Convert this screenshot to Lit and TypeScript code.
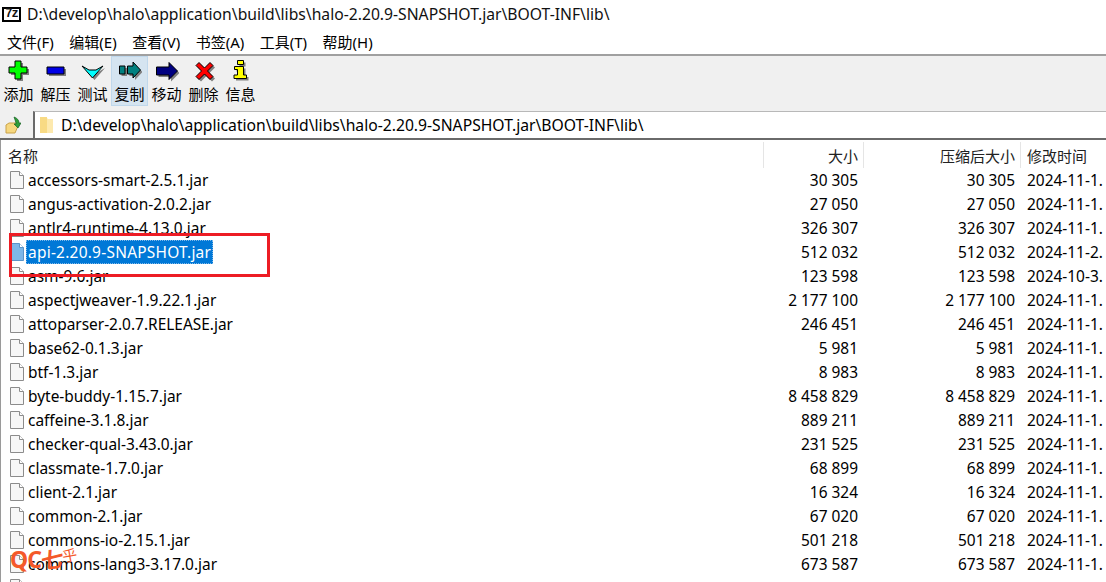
import { LitElement, html, css, svg } from 'lit';
import { customElement } from 'lit/decorators.js';

const MENUS = ['文件(F)', '编辑(E)', '查看(V)', '书签(A)', '工具(T)', '帮助(H)'];
const PATH = 'D:\\develop\\halo\\application\\build\\libs\\halo-2.20.9-SNAPSHOT.jar\\BOOT-INF\\lib\\';

// toolbar glyphs: black outline plus a grey drop shadow, like the old 7-Zip bitmaps
const shape = (points: string, fill: string) => svg`
  <polygon points=${points} fill="#808080" transform="translate(2 2)" />
  <polygon points=${points} fill=${fill} stroke="#000" stroke-width="1" />
`;

const TOOLS = [
  { label: '添加', icon: shape('8,3 14,3 14,9 20,9 20,15 14,15 14,21 8,21 8,15 2,15 2,9 8,9', '#00ff00') },
  { label: '解压', icon: shape('3,9 20,9 20,16 3,16', '#0000e6') },
  { label: '测试', icon: shape('1,8 8,12 15,12 22,8 11.5,20', '#00ffff') },
  {
    label: '复制',
    active: true,
    icon: svg`${shape('1.5,8 7,8 7,16 1.5,16', '#008080')}${shape('9.5,8 15,8 15,4 22.5,12 15,20 15,16 9.5,16', '#008080')}`,
  },
  { label: '移动', icon: shape('1.5,9 14,9 14,4.5 22.5,13 14,21.5 14,17 1.5,17', '#000080') },
  {
    label: '删除',
    icon: shape('7,4.5 12.5,10 18,4.5 21,7.5 15.5,13 21,18.5 18,21.5 12.5,16 7,21.5 4,18.5 9.5,13 4,7.5', '#ff0000'),
  },
  {
    label: '信息',
    icon: svg`${shape('8.5,2.5 14.5,2.5 14.5,6.5 8.5,6.5', '#ffff00')}${shape('5.5,8.5 14.5,8.5 14.5,17 17.5,17 17.5,20.5 5,20.5 5,17 8.5,17 8.5,11.5 5.5,11.5', '#ffff00')}`,
  },
];

const M1 = '2024-11-1.';
const FILES: [string, string, string][] = [
  ['accessors-smart-2.5.1.jar', '30 305', M1],
  ['angus-activation-2.0.2.jar', '27 050', M1],
  ['antlr4-runtime-4.13.0.jar', '326 307', M1],
  ['api-2.20.9-SNAPSHOT.jar', '512 032', '2024-11-2.'],
  ['asm-9.6.jar', '123 598', '2024-10-3.'],
  ['aspectjweaver-1.9.22.1.jar', '2 177 100', M1],
  ['attoparser-2.0.7.RELEASE.jar', '246 451', M1],
  ['base62-0.1.3.jar', '5 981', M1],
  ['btf-1.3.jar', '8 983', M1],
  ['byte-buddy-1.15.7.jar', '8 458 829', M1],
  ['caffeine-3.1.8.jar', '889 211', M1],
  ['checker-qual-3.43.0.jar', '231 525', M1],
  ['classmate-1.7.0.jar', '68 899', M1],
  ['client-2.1.jar', '16 324', M1],
  ['common-2.1.jar', '67 020', M1],
  ['commons-io-2.15.1.jar', '501 218', M1],
  ['commons-lang3-3.17.0.jar', '673 587', M1],
  ['', '', ''],
];

@customElement('app-root')
export class AppRoot extends LitElement {
  static styles = css`
    :host {
      display: block;
      position: relative;
      width: 1106px;
      height: 582px;
      overflow: hidden;
      background: #fff;
      color: #000;
      font-family: 'Noto Sans', 'Noto Sans CJK SC', sans-serif;
      font-size: 15px;
    }
    .title {
      display: flex;
      align-items: center;
      gap: 6px;
      height: 28px;
      padding-left: 2px;
      font-size: 15.7px;
      color: #111;
    }
    .logo {
      display: flex;
      align-items: center;
      justify-content: center;
      box-sizing: border-box;
      width: 19px;
      height: 15px;
      border: 2px solid #000;
      font: bold 12px/11px 'Liberation Mono', monospace;
      letter-spacing: -1px;
    }
    .menu {
      display: flex;
      gap: 15.5px;
      height: 26px;
      padding-left: 7px;
      align-items: center;
      font-size: 15px;
      border-bottom: 2px solid #a0a0a0;
    }
    .toolbar {
      display: flex;
      height: 55px;
      background: #f0f0f0;
    }
    .tool {
      display: flex;
      flex-direction: column;
      align-items: center;
      box-sizing: border-box;
      width: 37px;
      height: 50px;
      font-size: 15px;
      line-height: 18px;
      border: 1px solid transparent;
    }
    .tool svg {
      flex: none;
      width: 24px;
      height: 24px;
      margin: 1px 0 3px;
    }
    .tool span {
      white-space: nowrap;
    }
    .tool.active {
      background: #d5e4f0;
      border-color: #c0d8ec;
    }
    .address {
      display: flex;
      align-items: stretch;
      height: 27px;
      background: #f0f0f0;
      border-bottom: 2px solid #6a6a6a;
    }
    .up {
      display: flex;
      align-items: center;
      justify-content: center;
      width: 26px;
      padding-right: 7px;
    }
    .path {
      flex: 1;
      display: flex;
      align-items: center;
      gap: 8px;
      padding-left: 5px;
      background: #fff;
      border-left: 2px solid #6a6a6a;
      border-top: 1px solid #b8b8b8;
      font-size: 15.7px;
    }
    .list {
      display: grid;
      grid-template-columns: 763px 100px 157px 85px;
      grid-template-rows: 28px;
      grid-auto-rows: 24px;
      border-left: 1px solid #9a9a9a;
    }
    .head {
      display: flex;
      align-items: center;
      height: 26px;
      margin-top: 2px;
      padding: 0 5px 0 7px;
      box-sizing: border-box;
      border-right: 1px solid #e5e5e5;
      font-size: 15px;
      color: #222;
    }
    .head.num {
      justify-content: flex-end;
    }
    .head.last {
      border-right: none;
      padding-left: 6px;
    }
    .cell {
      display: flex;
      align-items: center;
      height: 24px;
      white-space: nowrap;
      overflow: hidden;
      font-size: 15.45px;
    }
    .cell.num {
      justify-content: flex-end;
      padding-right: 6px;
    }
    .cell.date {
      padding-left: 6px;
    }
    .name {
      gap: 2px;
      padding-left: 9px;
    }
    .name span {
      padding: 0 2px;
      height: 24px;
      line-height: 24px;
    }
    .name.selected span {
      background: #0078d7;
      color: #fff;
      letter-spacing: 0.25px;
      outline: 1px dotted #7fb8e8;
      outline-offset: -1px;
    }
    .highlight {
      position: absolute;
      left: 9px;
      top: 233px;
      width: 261px;
      height: 44px;
      box-sizing: border-box;
      border: 3px solid #ed1c24;
    }
    .mark {
      position: absolute;
      left: 10px;
      top: 546px;
      display: flex;
      align-items: flex-start;
      color: #f4592a;
      font-size: 23px;
      font-weight: 700;
      line-height: 26px;
      letter-spacing: -1px;
    }
    .mark .qi {
      font-size: 22px;
      transform: skewX(-10deg) rotate(-6deg);
    }
    .mark .hu {
      font-size: 15px;
      line-height: 18px;
      font-weight: 400;
      transform: rotate(-10deg);
    }
  `;

  private fileIcon(selected: boolean) {
    const fill = selected ? '#7db7e8' : '#f7f7f7';
    const line = selected ? '#5c94c8' : '#8c8c8c';
    return html`<svg width="14" height="18" viewBox="0 0 14 18" style="flex:none">
      <path d="M.5.5h9l4 4v13H.5z" fill=${fill} stroke=${line} />
      <path d="M9.5.5v4h4" fill="#fff" stroke=${line} />
    </svg>`;
  }

  render() {
    return html`
      <div class="title">
        <div class="logo">7z</div>
        <span>${PATH}</span>
      </div>
      <div class="menu">${MENUS.map((m) => html`<span>${m}</span>`)}</div>
      <div class="toolbar">
        ${TOOLS.map(
          (t) => html`<div class="tool ${t.active ? 'active' : ''}">
            <svg viewBox="0 0 24 24">${t.icon}</svg>
            <span>${t.label}</span>
          </div>`,
        )}
      </div>
      <div class="address">
        <div class="up">
          <svg width="16" height="18" viewBox="0 0 16 18">
            <path d="M1 9l3-2h9l-1 2 1 1-3 7H1z" fill="#f6d77e" stroke="#c9a24a" />
            <path d="M9 1c3 1 5 3 5 6h2l-3 5-4-4h2c0-2-1-4-2-7z" fill="#2f9e3a" stroke="#14601f" stroke-width=".7" />
          </svg>
        </div>
        <div class="path">
          <svg width="13" height="18" viewBox="0 0 13 18" style="flex:none">
            <path d="M0 1h6l2 2h5v14H0z" fill="#fde9ae" />
            <path d="M0 1h7v16H0z" fill="#f8da84" />
          </svg>
          <span>${PATH}</span>
        </div>
      </div>
      <div class="list">
        <div class="head">名称</div>
        <div class="head num">大小</div>
        <div class="head num">压缩后大小</div>
        <div class="head last">修改时间</div>
        ${FILES.map(([name, size, date]) => {
          const selected = name.startsWith('api-');
          return html`
            <div class="cell name ${selected ? 'selected' : ''}">
              ${this.fileIcon(selected)}<span>${name}</span>
            </div>
            <div class="cell num">${size}</div>
            <div class="cell num">${size}</div>
            <div class="cell date">${date}</div>
          `;
        })}
      </div>
      <div class="highlight"></div>
      <div class="mark"><span>QC</span><span class="qi">七</span><span class="hu">乎</span></div>
    `;
  }
}
